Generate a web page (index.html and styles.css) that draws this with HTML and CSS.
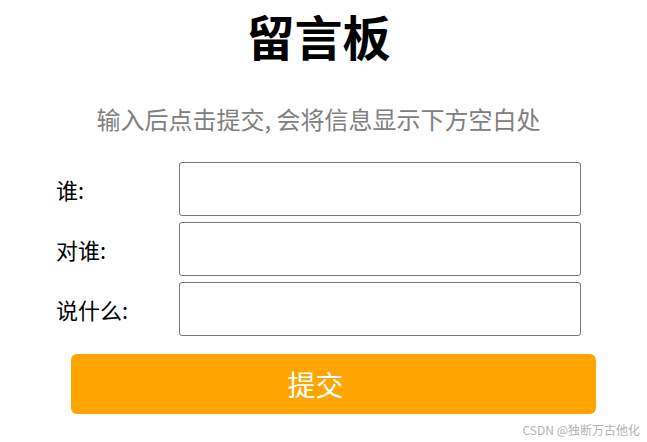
FILE: index.html
```html
<!DOCTYPE html>
<html lang="zh">
<head>
<meta charset="utf-8">
<title>留言板</title>
<link rel="stylesheet" href="styles.css">
</head>
<body>
<div class="container">
  <h1 class="title">留言板</h1>
  <p class="hint">输入后点击提交, 会将信息显示下方空白处</p>
  <div class="row"><span class="label">谁:</span><input class="field" type="text"></div>
  <div class="row"><span class="label">对谁:</span><input class="field" type="text"></div>
  <div class="row"><span class="label">说什么:</span><input class="field" type="text"></div>
  <button class="submit">提交</button>
</div>
<div class="watermark">CSDN @独断万古他化</div>
</body>
</html>
```
FILE: styles.css
```css
html, body {
  margin: 0;
  padding: 0;
  background: #fff;
}
body {
  font-family: "Noto Sans CJK SC", "Noto Sans", sans-serif;
  color: #000;
  position: relative;
  height: 442px;
  overflow: hidden;
}
.container {
  width: 525px;
  margin-left: 56px;
  display: flex;
  flex-direction: column;
}
.title {
  margin: 0;
  font-size: 48px;
  line-height: 70px;
  font-weight: 700;
  text-align: center;
}
.hint {
  margin: 32px 0 0 0;
  font-size: 24px;
  line-height: 34px;
  color: #808080;
  text-align: center;
}
.row {
  display: flex;
  align-items: center;
  height: 60px;
}
.hint + .row {
  margin-top: 23px;
}
.label {
  width: 123px;
  font-size: 22px;
  flex: none;
}
.field {
  width: 402px;
  height: 54px;
  box-sizing: border-box;
  border: 1px solid #767676;
  border-radius: 3px;
  margin: 0;
  padding: 0 4px;
  font-size: 20px;
}
.submit {
  margin-top: 15px;
  margin-left: 15px;
  width: 525px;
  height: 60px;
  border: none;
  border-radius: 6px;
  background: #ffa500;
  color: #fff;
  font-family: "Noto Sans CJK SC", sans-serif;
  font-size: 28px;
  padding: 0 36px 0 0;
}
.watermark {
  position: absolute;
  right: 7px;
  bottom: 4px;
  font-size: 12px;
  color: #b3b3b3;
  font-family: "Noto Sans CJK SC", sans-serif;
}
```
